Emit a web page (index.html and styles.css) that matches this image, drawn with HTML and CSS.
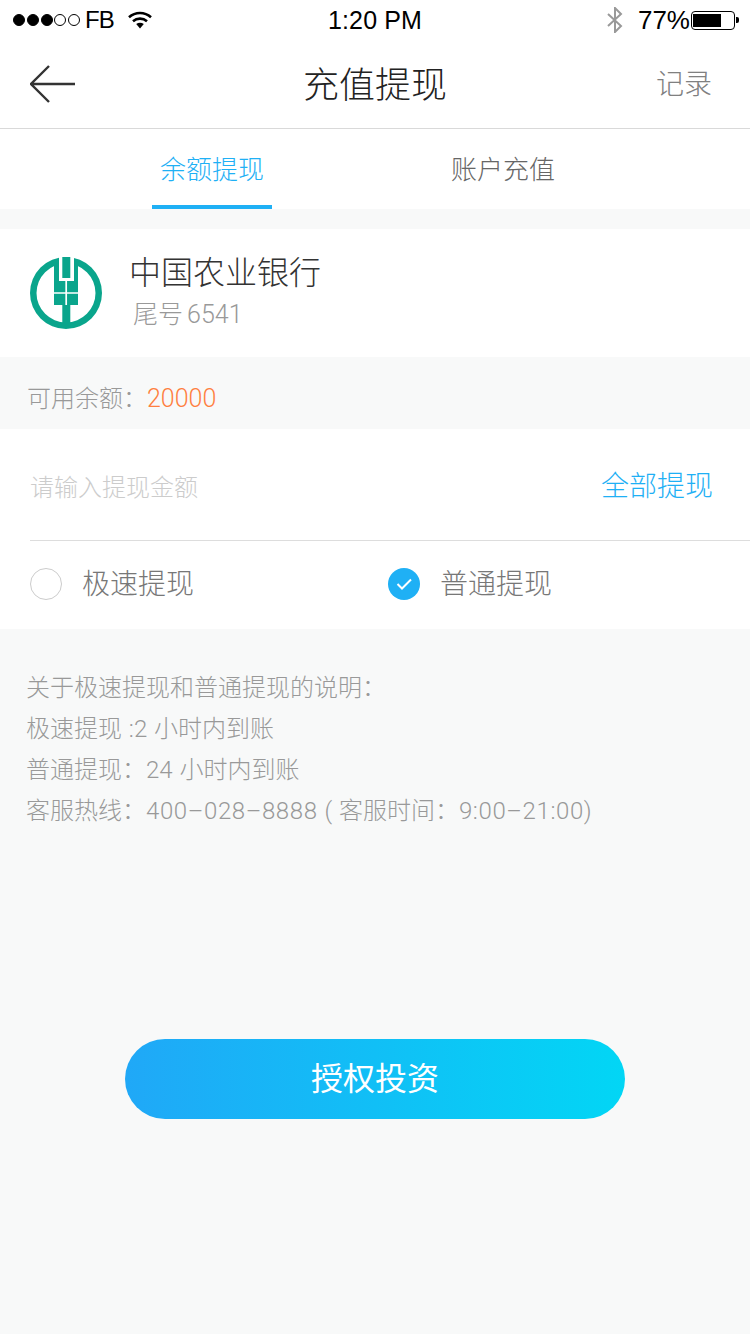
FILE: index.html
```html
<!DOCTYPE html>
<html lang="zh-CN">
<head>
<meta charset="utf-8">
<title>充值提现</title>
<link rel="stylesheet" href="styles.css">
</head>
<body>
<div class="page">
  <div class="status">
    <div class="status-left">
      <span class="dots"><i class="dot on"></i><i class="dot on"></i><i class="dot on"></i><i class="dot"></i><i class="dot"></i></span>
      <span class="carrier">FB</span>
      <svg class="wifi" width="24" height="18" viewBox="0 0 24 18"><path d="M1 6.2C7.3.6 16.7.6 23 6.2" fill="none" stroke="#000" stroke-width="2.6"/><path d="M5 10.2c4-3.4 10-3.4 14 0" fill="none" stroke="#000" stroke-width="2.6"/><path d="M8.2 13c2.4-1.6 5.2-1.6 7.6 0L12 17.4z" fill="#000"/></svg>
    </div>
    <div class="time">1:20 PM</div>
    <div class="status-right">
      <svg class="bt" width="16" height="26" viewBox="0 0 16 26"><path d="M1 7l13 12-6 6V1l6 6L1 19" fill="none" stroke="#999" stroke-width="2"/></svg>
      <span class="pct">77%</span>
      <span class="battery"><span class="level"></span></span><span class="cap"></span>
    </div>
  </div>

  <header class="nav">
    <svg class="back" width="45" height="38" viewBox="0 0 45 38"><path d="M19 1L1 19l18 18M1 19h44" fill="none" stroke="#333" stroke-width="2.4"/></svg>
    <h1 class="title">充值提现</h1>
    <span class="record">记录</span>
  </header>

  <nav class="tabs">
    <div class="tab active"><span class="tab-label">余额提现</span></div>
    <div class="tab"><span class="tab-label">账户充值</span></div>
  </nav>

  <section class="bank">
    <svg class="logo" width="72" height="72" viewBox="0 0 72 72">
      <path fill="#0aa58c" fill-rule="evenodd" d="M36 0a36 36 0 1 0 0 72 36 36 0 0 0 0-72zm0 6.5a29.5 29.5 0 1 1 0 59 29.5 29.5 0 0 1 0-59z"/>
      <rect x="24" y="3" width="24" height="45" fill="#0aa58c"/>
      <rect x="29" y="0" width="15" height="24" fill="#fff"/>
      <rect x="32.3" y="0" width="8" height="21" fill="#0aa58c"/>
      <path d="M36.2 24v24M24 36h24" stroke="#fff" stroke-width="1.7" fill="none"/>
      <rect x="32.3" y="48" width="8" height="23" fill="#0aa58c"/>
    </svg>
    <div class="bank-text">
      <div class="bank-name">中国农业银行</div>
      <div class="bank-tail">尾号 6541</div>
    </div>
  </section>

  <div class="balance">可用余额：<span class="amount">20000</span></div>

  <section class="form">
    <div class="input-row">
      <span class="placeholder">请输入提现金额</span>
      <span class="all">全部提现</span>
    </div>
    <div class="radios">
      <div class="radio"><span class="circle"></span><span class="radio-label">极速提现</span></div>
      <div class="radio"><svg class="checked" width="32" height="32" viewBox="0 0 32 32"><circle cx="16" cy="16" r="16" fill="#1fb0f5"/><path d="M9.5 16l4.5 4.5 9-9" fill="none" stroke="#fff" stroke-width="2"/></svg><span class="radio-label">普通提现</span></div>
    </div>
  </section>

  <section class="notes">
    <p>关于极速提现和普通提现的说明：</p>
    <p>极速提现 :2 小时内到账</p>
    <p>普通提现：24 小时内到账</p>
    <p>客服热线：<span class="num">400–028–8888</span> ( 客服时间：<span class="num">9:00–21:00)</span></p>
  </section>

  <div class="action"><button class="submit">授权投资</button></div>
</div>
</body>
</html>
```
FILE: styles.css
```css
* { box-sizing: border-box; }
html, body { margin: 0; padding: 0; }
body { background: #f8f9f9; font-family: Roboto, "Noto Sans CJK SC", sans-serif; font-weight: 300; }
.page { width: 750px; height: 1334px; overflow: hidden; background: #f8f9f9; }

.status { height: 40px; background: #fff; display: grid; grid-template-columns: 1fr auto 1fr; align-items: center; font-family: "Liberation Sans", sans-serif; font-weight: 400; color: #000; }
.status-left { display: flex; align-items: center; padding-left: 13px; }
.dots { display: flex; gap: 1.75px; }
.dot { width: 12px; height: 12px; border-radius: 50%; border: 1px solid #000; display: block; }
.dot.on { background: #000; }
.carrier { font-size: 24px; margin-left: 5px; letter-spacing: -1px; }
.wifi { margin-left: 14px; }
.time { font-size: 25px; letter-spacing: 0.15px; }
.status-right { display: flex; align-items: center; justify-content: flex-end; padding-right: 11px; }
.bt { margin-right: 15px; }
.pct { font-size: 26px; margin-right: 1px; }
.battery { width: 44px; height: 19px; border: 1px solid #000; border-radius: 4px; padding: 2px 1px; display: block; }
.level { display: block; width: 28px; height: 100%; background: #000; }
.cap { width: 3px; height: 6px; background: #000; border-radius: 0 2px 2px 0; margin-left: 1px; }

.nav { height: 89px; background: #fff; border-bottom: 1px solid #d9d9d9; display: grid; grid-template-columns: 1fr auto 1fr; align-items: center; padding: 0 38px 0 38px; }
.back { display: block; margin-left: -8px; }
.title { margin: 4px 0 0; font-size: 36px; font-weight: 300; color: #222; line-height: 1; }
.record { justify-self: end; font-size: 28px; color: #808080; margin-bottom: 4px; }

.tabs { height: 80px; background: #fff; display: flex; padding-left: 152px; gap: 171px; }
.tab { width: 120px; display: flex; justify-content: center; align-items: center; font-size: 26px; color: #666; border-bottom: 4px solid transparent; }
.tab.active { color: #1fb0f5; border-bottom-color: #1fb0f5; }

.bank { margin-top: 20px; height: 128px; background: #fff; display: flex; align-items: center; padding-left: 30px; gap: 27px; }
.logo { display: block; }
.bank-name { font-size: 32px; color: #333; line-height: 44px; font-weight: 300; }
.bank-tail { font-size: 25px; color: #999; line-height: 40px; padding-left: 4px; word-spacing: -2px; }

.balance { height: 72px; line-height: 72px; padding: 6px 0 0 27px; font-size: 24px; color: #999; }
.amount { color: #ff7f3f; font-size: 25px; }

.form { background: #fff; height: 200px; }
.input-row { height: 112px; margin-left: 30px; border-bottom: 1px solid #ddd; display: flex; align-items: center; justify-content: space-between; padding-right: 37px; }
.placeholder { font-size: 24px; color: #ccc; margin-top: 2px; }
.all { font-size: 28px; color: #1fb0f5; margin-bottom: 2px; }
.radios { display: flex; height: 88px; align-items: center; padding: 0 0 2px 30px; }
.radio { width: 358px; display: flex; align-items: center; gap: 20px; font-size: 28px; color: #777; }
.radio-label { margin-bottom: 4px; }
.circle { width: 32px; height: 32px; border-radius: 50%; border: 1px solid #ccc; display: block; }
.checked { display: block; }

.notes { padding: 39px 0 0 26px; font-size: 24px; color: #999; word-spacing: 1px; }
.notes p { margin: 0; line-height: 41px; }
.num { letter-spacing: 0.6px; }

.action { display: flex; justify-content: center; margin-top: 207px; }
.submit { width: 500px; height: 80px; border: 0; border-radius: 40px; padding: 0 0 6px; background: linear-gradient(90deg, #20a8f7, #02d6f5); color: #fff; font: 400 32px "Noto Sans CJK SC", sans-serif; }
```
